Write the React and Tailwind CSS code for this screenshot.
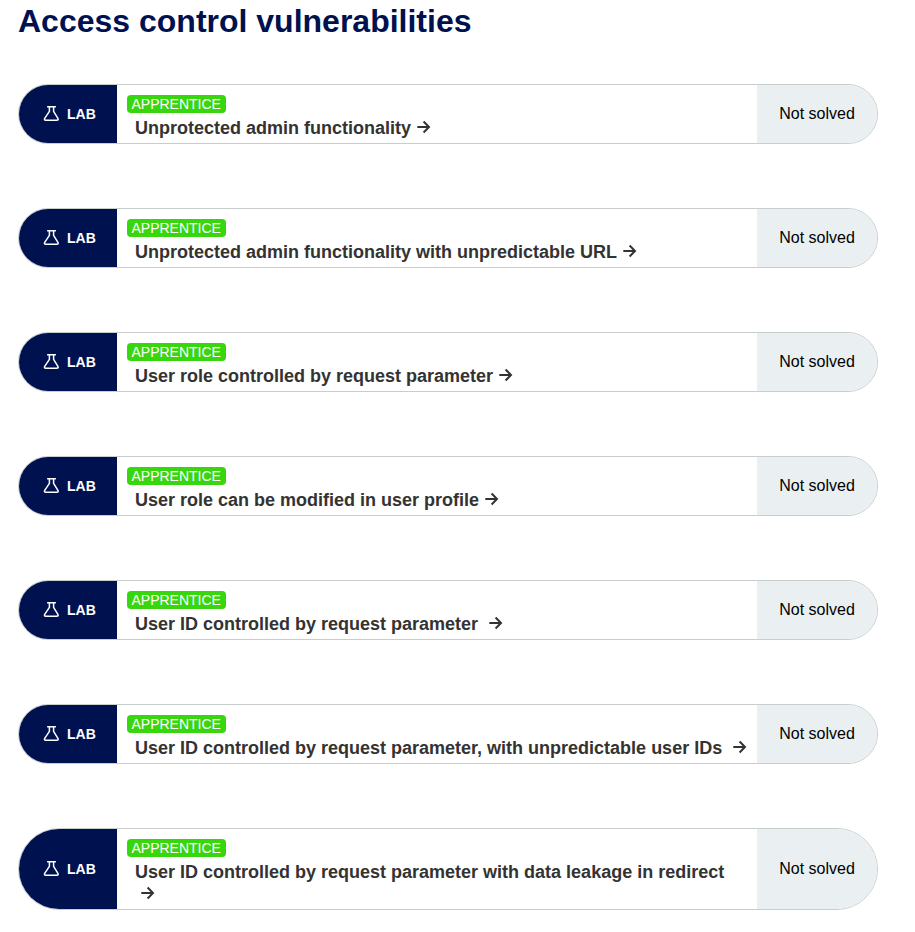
const labs = [
  { title: "Unprotected admin functionality" },
  { title: "Unprotected admin functionality with unpredictable URL" },
  { title: "User role controlled by request parameter" },
  { title: "User role can be modified in user profile" },
  { title: "User ID controlled by request parameter", spaced: true },
  { title: "User ID controlled by request parameter, with unpredictable user IDs", spaced: true },
  { title: "User ID controlled by request parameter with data leakage in redirect", wrap: true },
];

function Flask() {
  return (
    <svg className="h-4 w-4" viewBox="0 0 16 16" fill="none" stroke="currentColor" strokeWidth="1.5" strokeLinejoin="round">
      <path d="M4.1 0.75h8.8M6.4 0.75v4.6L1.7 12.4Q0.9 14.2 2.8 14.2H13.8Q15.7 14.2 14.9 12.4L10.6 5.3V0.75" />
    </svg>
  );
}

function Arrow() {
  return (
    <svg className="inline-block h-[14px] w-[14px] align-[0px]" viewBox="0 0 14 14" fill="none" stroke="currentColor" strokeWidth="2">
      <path d="M0.3 7h11.9M6.6 1.5l5.4 5.5-5.4 5.5" />
    </svg>
  );
}

function Lab({ title, spaced, wrap }) {
  return (
    <div className={`flex overflow-hidden border border-[#c8cdce] bg-white ${wrap ? "h-[82px] rounded-[41px]" : "h-[60px] rounded-[30px]"}`}>
      <div className="flex w-[98px] shrink-0 items-center gap-2 bg-[#00114f] pl-6 text-sm font-bold text-white">
        <Flask />
        <span>LAB</span>
      </div>
      <div className="flex min-w-0 flex-1 flex-col items-start pt-[10px] pl-[10px]">
        <span className="h-[18px] w-[99px] rounded bg-[#38d60e] pl-[4.5px] text-sm leading-[18px] text-white">APPRENTICE</span>
        <a className="mt-1 pl-2 text-[18px] leading-[22px] font-bold whitespace-nowrap text-[#333332]">
          {title}
          {wrap && <br />}
          <span className={spaced ? "ml-[11px]" : "ml-[6px]"}><Arrow /></span>
        </a>
      </div>
      <div className="flex w-[120px] shrink-0 items-center justify-center bg-[#eaf0f2] text-base text-black">Not solved</div>
    </div>
  );
}

export default function App() {
  return (
    <main className="h-[932px] overflow-hidden bg-white pl-[18px] font-['Liberation_Sans',Arial,sans-serif]">
      <h1 className="h-[84px] text-[32px] leading-[42px] font-bold text-[#00114f]">Access control vulnerabilities</h1>
      <div className="flex w-[860px] flex-col gap-16">
        {labs.map((lab) => <Lab key={lab.title} {...lab} />)}
      </div>
    </main>
  );
}
